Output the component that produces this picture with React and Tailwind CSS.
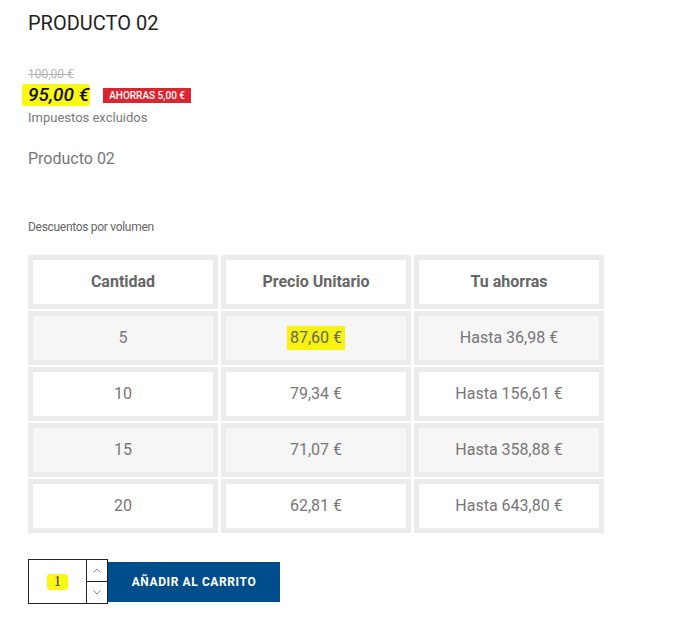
import React from "react";

const ROWS = [
  { qty: "5", price: "87,60 €", save: "Hasta 36,98 €", hl: true },
  { qty: "10", price: "79,34 €", save: "Hasta 156,61 €" },
  { qty: "15", price: "71,07 €", save: "Hasta 358,88 €" },
  { qty: "20", price: "62,81 €", save: "Hasta 643,80 €" },
];

function Cell({ children, shade, head }) {
  return (
    <div
      className={`flex h-[54px] items-center justify-center border-[5px] border-[#ebebeb] ${
        shade ? "bg-[#f6f6f6]" : "bg-white"
      } ${head ? "font-bold text-[#666]" : "text-[#777]"} text-[16px]`}
    >
      {children}
    </div>
  );
}

export default function App() {
  return (
    <div className="min-h-[627px] bg-white pl-[28px] pt-[9px] font-['Roboto',sans-serif]">
      <h1 className="text-[20px] leading-[28px] text-[#232323]">PRODUCTO 02</h1>

      <div className="mt-[30px] text-[12px] leading-[14px] text-[#b3b3b3] line-through">100,00 €</div>
      <div className="mt-[3px] flex items-center gap-[13px]">
        <span className="-ml-[6px] rounded-[3px] bg-[#fbf715] pl-[6px] pr-[1px] text-[19px] italic font-medium leading-[22px] text-[#111]">
          95,00 €
        </span>
        <span className="bg-[#db2530] px-[6px] text-[10px] font-medium leading-[15px] text-white">
          AHORRAS 5,00 €
        </span>
      </div>
      <div className="mt-[3px] text-[13px] leading-[17px] text-[#7a7a7a]">Impuestos excluidos</div>

      <div className="mt-[23px] text-[16px] leading-[20px] text-[#777]">Producto 02</div>

      <div className="mt-[51px] text-[12px] leading-[14px] tracking-[-0.3px] text-[#666]">
        Descuentos por volumen
      </div>

      <div className="mt-[21px] grid w-[576px] grid-cols-3 gap-x-[3px] gap-y-[2px]">
        <Cell head>Cantidad</Cell>
        <Cell head>Precio Unitario</Cell>
        <Cell head>Tu ahorras</Cell>
        {ROWS.map((r, i) => (
          <React.Fragment key={r.qty}>
            <Cell shade={i % 2 === 0}>{r.qty}</Cell>
            <Cell shade={i % 2 === 0}>
              {r.hl ? <span className="bg-[#f7f20f] px-[3px] text-[#666]">{r.price}</span> : r.price}
            </Cell>
            <Cell shade={i % 2 === 0}>{r.save}</Cell>
          </React.Fragment>
        ))}
      </div>

      <div className="mt-[26px] flex items-center">
        <div className="flex h-[45px] w-[80px] border border-[#222]">
          <div className="flex flex-1 items-center justify-center">
            <span className="rounded-[3px] bg-[#fbf715] px-[7px] font-['Liberation_Serif',serif] text-[14px] leading-[16px] text-[#222]">
              1
            </span>
          </div>
          <div className="flex w-[21px] flex-col border-l border-[#222]">
            <div className="flex flex-1 items-center justify-center border-b border-[#222]">
              <svg width="8" height="5" viewBox="0 0 8 5" fill="none" stroke="#888" strokeWidth="1">
                <path d="M0.5 4.5 L4 1 L7.5 4.5" />
              </svg>
            </div>
            <div className="flex flex-1 items-center justify-center">
              <svg width="8" height="5" viewBox="0 0 8 5" fill="none" stroke="#888" strokeWidth="1">
                <path d="M0.5 0.5 L4 4 L7.5 0.5" />
              </svg>
            </div>
          </div>
        </div>
        <button className="flex h-[40px] w-[172px] items-center justify-center bg-[#004d8c] text-[12px] font-bold tracking-[0.6px] text-white">
          AÑADIR AL CARRITO
        </button>
      </div>
    </div>
  );
}
